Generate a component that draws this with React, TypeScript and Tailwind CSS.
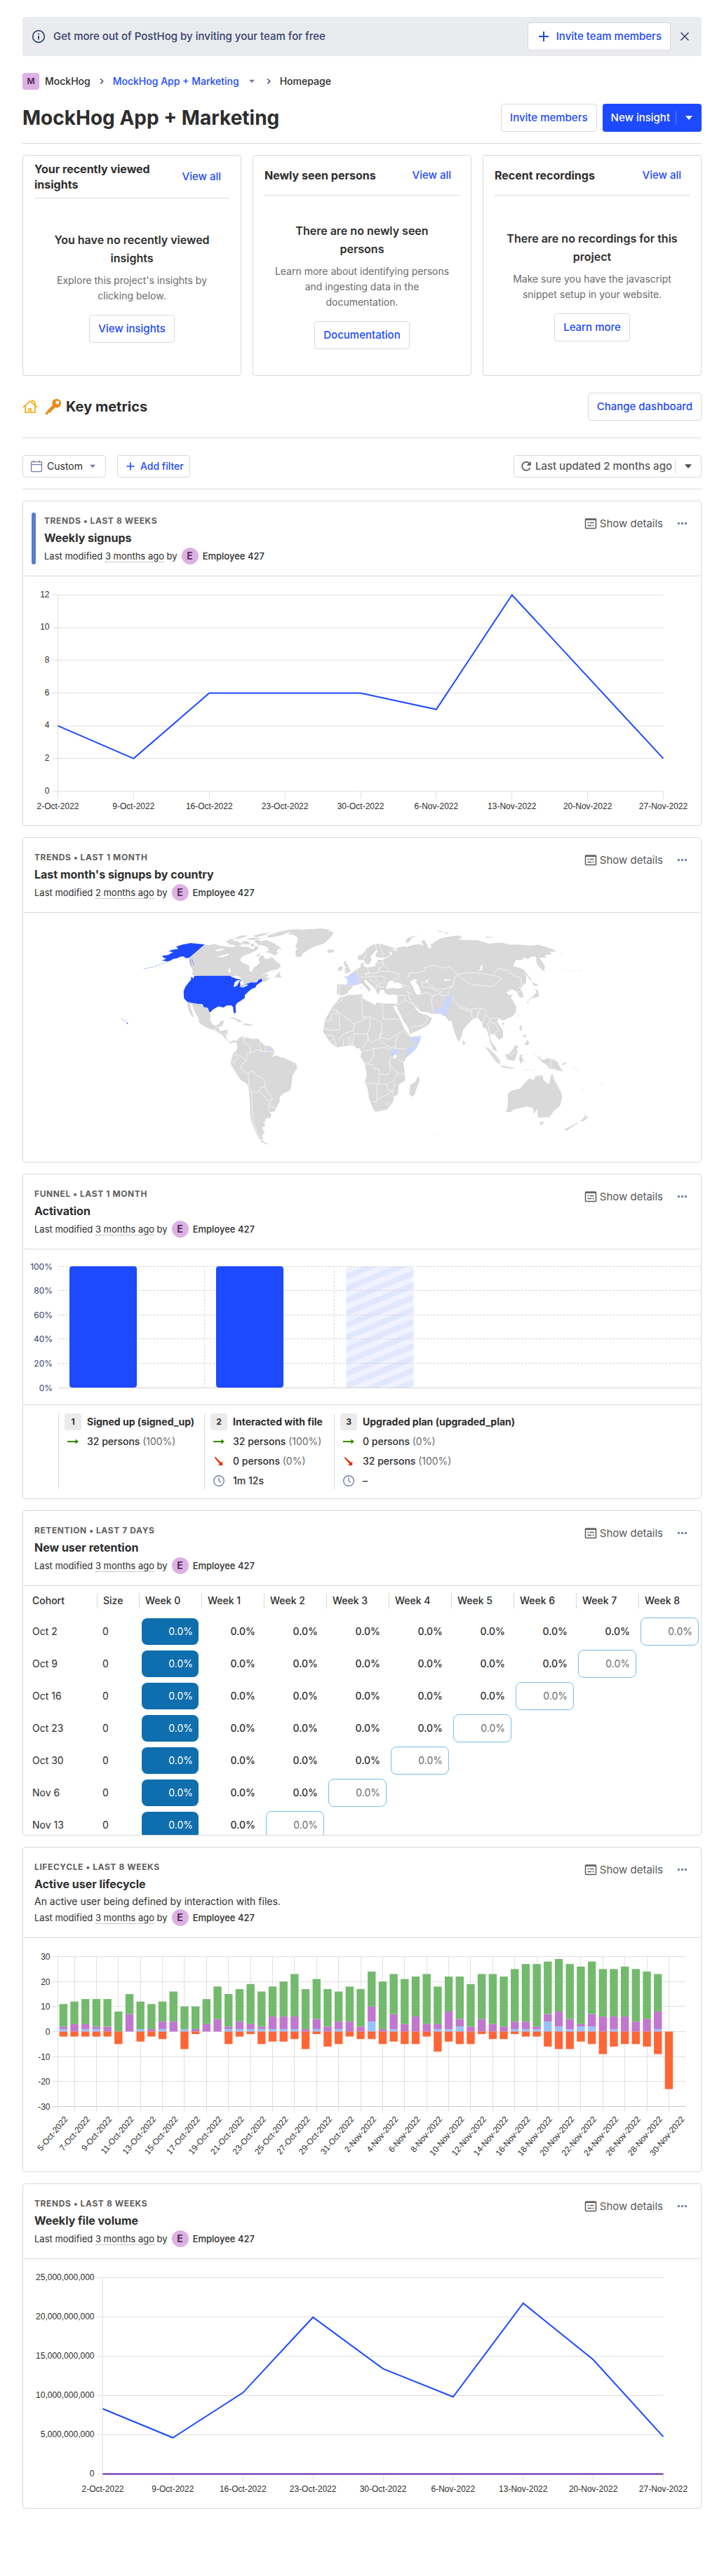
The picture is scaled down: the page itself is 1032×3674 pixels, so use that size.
import React from "react";

/* ---------- icons ---------- */

function InfoIcon() {
  return (
    <svg width="22" height="22" viewBox="0 0 24 24" fill="#35416b" aria-hidden="true">
      <path d="M11 7h2v2h-2zm0 4h2v6h-2zm1-9a10 10 0 1 0 0 20 10 10 0 0 0 0-20zm0 18.2a8.2 8.2 0 1 1 0-16.4 8.2 8.2 0 0 1 0 16.4z" />
    </svg>
  );
}

function PlusIcon({ size = 20 }: { size?: number }) {
  return (
    <svg width={size} height={size} viewBox="0 0 20 20" fill="none" stroke="#1d4aff" strokeWidth="2" aria-hidden="true">
      <path d="M10 3v14M3 10h14" />
    </svg>
  );
}

function CloseIcon() {
  return (
    <svg width="20" height="20" viewBox="0 0 20 20" fill="none" stroke="#35416b" strokeWidth="1.6" aria-hidden="true">
      <path d="M4.5 4.5l11 11M15.5 4.5l-11 11" />
    </svg>
  );
}

function ChevronIcon() {
  return (
    <svg width="16" height="16" viewBox="0 0 16 16" fill="none" stroke="#35416b" strokeWidth="1.4" aria-hidden="true">
      <path d="M6.3 4.5L9.8 8l-3.5 3.5" />
    </svg>
  );
}

function CaretIcon({ className }: { className: string }) {
  return (
    <svg viewBox="0 0 16 16" className={className} fill="currentColor" aria-hidden="true">
      <path d="M4 5.7h8L8 10.3z" />
    </svg>
  );
}

function HomeIcon() {
  return (
    <svg width="22" height="22" viewBox="0 0 22 22" fill="none" stroke="#f7a501" strokeWidth="1.6" aria-hidden="true">
      <path d="M1 11.8L11 3l10 8.800M4.200 10v9.200h5.200V14h2.700v5.200h5.700V10" />
      <path d="M13 1.800l4.800 2.400v4.600" />
    </svg>
  );
}

function KeyIcon() {
  return (
    <svg width="24" height="24" viewBox="0 0 24 24" role="img" aria-label="Key">
      <path d="M11.500 9.500l3.300 3.300-7.600 7.700-2.200.3-.8 2-3 .700-.500-2.300z" fill="#e28413" />
      <path d="M2 21.800L12.500 11" stroke="#f39c2b" strokeWidth="1.200" />
      <path d="M3.800 17.600L11 10.200" stroke="#c56e0b" strokeWidth=".6" />
      <path
        fillRule="evenodd"
        d="M10.500 7.500C10 3.800 13 1 16.800 1 20.800 1 23 3.900 23 7c0 4-3 6.700-6.800 6.500-1.700-.1-2.700-.5-3.700-1.500-1.200-1.100-1.800-2.800-2-4.500zM17.800 3.600a2.500 2.500 0 1 0 0 5 2.500 2.500 0 0 0 0-5z"
        fill="#e88b17"
      />
    </svg>
  );
}

function CalendarIcon() {
  return (
    <svg width="18" height="18" viewBox="0 0 18 18" fill="none" stroke="#747ea2" strokeWidth="1.300" aria-hidden="true">
      <rect x="1.600" y="2.600" width="14.800" height="14" rx="1" />
      <path d="M1.600 6.700h14.800M4.600 .800v3M13.400 .800v3" />
    </svg>
  );
}

function RefreshIcon() {
  return (
    <svg width="18" height="18" viewBox="0 0 18 18" fill="none" stroke="#5a5a5a" strokeWidth="1.700" aria-hidden="true">
      <path d="M14.600 11.300A6 6 0 1 1 13.400 4.600" />
      <path d="M15.700 2v6h-6z" fill="#5a5a5a" stroke="none" />
    </svg>
  );
}

function DetailsIcon() {
  return (
    <svg width="18" height="18" viewBox="0 0 18 18" fill="none" stroke="#5a5a5a" strokeWidth="1.500" aria-hidden="true">
      <rect x="1.500" y="2" width="15" height="13.500" rx="1" />
      <path d="M4.500 7.500h2M7.800 7.500h5.700M4.500 11.500h5.700M11.500 11.500h2M2 3.300h14" />
    </svg>
  );
}

function DotsIcon() {
  return (
    <svg width="16" height="16" viewBox="0 0 16 16" fill="#747ea2" aria-hidden="true">
      <circle cx="2.500" cy="7.500" r="1.700" />
      <circle cx="7.500" cy="7.500" r="1.700" />
      <circle cx="12.500" cy="7.500" r="1.700" />
    </svg>
  );
}

function ArrowRightIcon() {
  return (
    <svg width="16" height="16" viewBox="0 0 16 16" fill="#388600" aria-hidden="true">
      <path d="M0 7.100h11.500V4.500L16 8l-4.500 3.500V8.900H0z" />
    </svg>
  );
}

function ArrowDownIcon() {
  return (
    <svg width="16" height="16" viewBox="0 0 16 16" fill="#db3707" aria-hidden="true">
      <path d="M2.900 1.700l8.300 8.300 2-2.100v6.200H7l2.100-2L1.700 2.900z" />
    </svg>
  );
}

function ClockIcon() {
  return (
    <svg width="18" height="18" viewBox="0 0 18 18" fill="none" stroke="#747ea2" strokeWidth="1.400" aria-hidden="true">
      <circle cx="9" cy="9" r="7.300" />
      <path d="M9 4.500V9l2.800 2.500" />
    </svg>
  );
}

/* ---------- shared parts ---------- */

function OutlineButton({ children }: { children: React.ReactNode }) {
  return (
    <button className="flex h-10 items-center gap-2 rounded border border-[#dadada] bg-white px-3 text-[15px] font-medium text-[#1d4aff]">
      {children}
    </button>
  );
}

type CardProps = {
  kind: string;
  title: string;
  description?: string;
  modified: string;
  ribbon?: boolean;
  children: React.ReactNode;
};

function InsightCard({ kind, title, description, modified, ribbon, children }: CardProps) {
  return (
    <section className="flex h-[464px] flex-col overflow-hidden rounded border border-[#dadada]">
      <header className="flex shrink-0 rounded-b border-b border-[#dadada] p-4">
        {ribbon && <div className="mr-3 -ml-1 w-1.5 rounded-full bg-[#597dce]" />}
        <div className="min-w-0 flex-1">
          <div className="text-xs leading-6 font-bold tracking-wider text-[#5f5f5f] uppercase">{kind}</div>
          <h4 className="mb-0.5 text-base leading-6 font-bold">{title}</h4>
          {description && <p className="text-sm leading-[22px]">{description}</p>}
          <div className="flex h-6 items-center text-[13px]">
            <span>
              Last modified{" "}
              <span className="border-b border-dotted border-[#9a9a9a]">{modified}</span> by
            </span>
            <span className="mx-1.5 flex size-6 items-center justify-center rounded-full bg-[#dcb1e3] text-sm font-bold text-[#572e5e]">
              E
            </span>
            <span className="font-medium">Employee 427</span>
          </div>
        </div>
        <div className="flex h-8 items-center">
          <button className="flex items-center gap-1 text-[15px] text-[#5a5a5a]">
            <DetailsIcon />
            Show details
          </button>
          <button className="mr-0.5 ml-5" aria-label="More options">
            <DotsIcon />
          </button>
        </div>
      </header>
      {children}
    </section>
  );
}

/* ---------- charts ---------- */

const DATES = [
  "2-Oct-2022",
  "9-Oct-2022",
  "16-Oct-2022",
  "23-Oct-2022",
  "30-Oct-2022",
  "6-Nov-2022",
  "13-Nov-2022",
  "20-Nov-2022",
  "27-Nov-2022",
];

type LineChartProps = { left: number; max: number; step: number; values: number[]; zeroLine?: boolean; label: string };

function LineChart({ left, max, step, values, zeroLine, label }: LineChartProps) {
  const right = 912.5;
  const top = 26.5;
  const bottom = 306.5;
  const y = (v: number) => bottom - (v / max) * (bottom - top);
  const x = (i: number) => left + (i * (right - left)) / 8;
  const ticks: number[] = [];
  for (let v = 0; v <= max; v += step) ticks.push(v);
  return (
    <svg viewBox="0 0 966 355" className="w-full" role="img" aria-label={label} fontFamily='"Liberation Sans", sans-serif' fontSize="12" fill="#2d2d2d">
      {ticks.map((v) => (
        <g key={v}>
          <path d={`M${left - 8} ${Math.floor(y(v)) + 0.5}H${right}`} stroke="#e0e0e0" />
          <text x={left - 12} y={y(v) + 3} textAnchor="end">
            {v.toLocaleString("en-US")}
          </text>
        </g>
      ))}
      <path d={`M${left} ${top}V${bottom}`} stroke="#e0e0e0" />
      {DATES.map((d, i) => (
        <g key={d}>
          <path d={`M${Math.floor(x(i)) + 0.5} ${bottom}v11`} stroke="#e0e0e0" />
          <text x={x(i)} y="332" textAnchor="middle">
            {d}
          </text>
        </g>
      ))}
      {zeroLine && <path d={`M${left} ${bottom}H${right}`} stroke="#621da6" strokeWidth="2" />}
      <polyline fill="none" stroke="#1d4aff" strokeWidth="2" points={values.map((v, i) => `${x(i)},${y(v)}`).join(" ")} />
    </svg>
  );
}

/* Each entry: total, top of resurrecting, top of new, dormant */
const LIFECYCLE: number[][] = [
  [11, 2, 1, 2], [12, 3, 0, 2], [13, 3, 1, 2], [13, 2, 1, 2], [13, 2, 0, 2], [8, 0, 0, 5], [15, 7, 0, 0], [12, 1, 1, 4],
  [11, 1, 0, 2], [12, 4, 1, 3], [16, 4, 0, 0], [10, 1, 1, 7], [10, 1, 0, 1], [13, 3, 0, 0], [18, 5, 0, 0], [15, 2, 1, 5],
  [17, 4, 1, 2], [19, 3, 1, 1], [16, 2, 1, 5], [18, 6, 1, 4], [20, 6, 1, 4], [23, 6, 1, 3], [17, 1, 0, 7], [21, 5, 1, 1],
  [17, 2, 0, 6], [16, 4, 1, 5], [18, 4, 0, 2], [17, 2, 0, 3], [24, 10, 4, 3], [20, 1, 0, 5], [23, 7, 1, 4], [21, 3, 0, 5],
  [22, 6, 0, 5], [23, 3, 0, 2], [18, 3, 1, 8], [22, 8, 1, 4], [22, 5, 2, 5], [19, 2, 0, 5], [23, 5, 0, 1], [23, 3, 0, 3],
  [22, 2, 0, 3], [25, 4, 1, 1], [27, 4, 1, 2], [27, 2, 1, 2], [28, 7, 4, 6], [29, 8, 2, 7], [27, 5, 1, 7], [26, 3, 2, 4],
  [28, 7, 2, 5], [25, 6, 0, 9], [25, 6, 1, 6], [26, 6, 0, 5], [25, 4, 0, 5], [24, 5, 0, 6], [23, 8, 1, 9], [0, 0, 0, 23],
];

function lifecycleDate(i: number) {
  const day = 5 + i * 2;
  return day <= 31 ? `${day}-Oct-2022` : `${day - 31}-Nov-2022`;
}

function LifecycleChart() {
  const left = 49.5;
  const right = 944;
  const pitch = (right - left) / 57;
  const zero = 133.5;
  const unit = 107 / 30;
  const center = (i: number) => left + pitch * (i + 0.5);
  return (
    <svg viewBox="0 0 966 333" className="w-full" role="img" aria-label="Active user lifecycle" fontFamily='"Liberation Sans", sans-serif' fontSize="12" fill="#2d2d2d">
      {[30, 20, 10, 0, -10, -20, -30].map((v) => {
        const y = Math.floor(zero - v * unit) + 0.5;
        return (
          <g key={v}>
            <path d={`M${left - 8} ${y}H${right}`} stroke={v === -30 ? "#c8c8c8" : "#e0e0e0"} />
            <text x={left - 11} y={y + 4} textAnchor="end">
              {v}
            </text>
          </g>
        );
      })}
      {Array.from({ length: 29 }, (_, k) => {
        const gx = k === 0 ? left : Math.floor(center(2 * k - 1)) + 0.5;
        return <path key={k} d={`M${gx} 26.500V248.500`} stroke="#e0e0e0" />;
      })}
      {LIFECYCLE.map(([total, res, fresh, dormant], i) => {
        const bx = center(i) - 5.7;
        const bar = (from: number, to: number, fill: string) =>
          from === to ? null : <rect x={bx} y={zero - Math.max(from, to) * unit} width="11.400" height={Math.abs(to - from) * unit} fill={fill} />;
        return (
          <g key={i}>
            {bar(0, fresh, "#98c2ff")}
            {bar(fresh, res, "#c177cf")}
            {bar(res, total, "#73ba6d")}
            {bar(0, -dormant, "#ff6636")}
          </g>
        );
      })}
      {Array.from({ length: 29 }, (_, k) => (
        <text key={k} textAnchor="end" dy="4" transform={`translate(${center(2 * k) + 4} 256) rotate(-50)`}>
          {lifecycleDate(k)}
        </text>
      ))}
    </svg>
  );
}

function FunnelChart() {
  const top = 25.5;
  const gap = 34.6;
  return (
    <svg viewBox="0 0 966 222" className="w-full" role="img" aria-label="Activation funnel" fontFamily="Inter, sans-serif" fontSize="12" fill="#35416b">
      <defs>
        <pattern id="stripes" width="16" height="16" patternUnits="userSpaceOnUse" patternTransform="rotate(-22.5)">
          <rect width="16" height="16" fill="#f1f2ff" />
          <rect width="16" height="8" fill="#e0e7ff" />
        </pattern>
      </defs>
      <rect x="460.500" y="24.500" width="96" height="173" rx="4" fill="url(#stripes)" />
      {[100, 80, 60, 40, 20, 0].map((v, i) => {
        const y = Math.floor(top + i * gap - 1.5) + 0.5;
        return (
          <g key={v}>
            <path d={`M50 ${y}H966`} stroke="#d4d4d4" strokeDasharray={v === 0 ? undefined : "3 2"} />
            <text x="42" y={y + 4} textAnchor="end">
              {v}%
            </text>
          </g>
        );
      })}
      <path d="M258.500 25V197M443.500 25V197" stroke="#dadada" strokeDasharray="3 2" />
      <rect x="66" y="24" width="96" height="173" rx="4" fill="#1d4aff" />
      <rect x="275" y="24" width="96" height="173" rx="4" fill="#1d4aff" />
    </svg>
  );
}

type Step = { n: number; name: string; rows: { icon: React.ReactNode; text: string; pct?: string }[] };

const STEPS: Step[] = [
  { n: 1, name: "Signed up (signed_up)", rows: [{ icon: <ArrowRightIcon />, text: "32 persons", pct: "(100%)" }] },
  {
    n: 2,
    name: "Interacted with file",
    rows: [
      { icon: <ArrowRightIcon />, text: "32 persons", pct: "(100%)" },
      { icon: <ArrowDownIcon />, text: "0 persons", pct: "(0%)" },
      { icon: <ClockIcon />, text: "1m 12s" },
    ],
  },
  {
    n: 3,
    name: "Upgraded plan (upgraded_plan)",
    rows: [
      { icon: <ArrowRightIcon />, text: "0 persons", pct: "(0%)" },
      { icon: <ArrowDownIcon />, text: "32 persons", pct: "(100%)" },
      { icon: <ClockIcon />, text: "–" },
    ],
  },
];

function FunnelSteps() {
  return (
    <div className="-mt-px grid grid-cols-[50px_208px_185px_1fr] border-t border-[#dadada] py-3">
      <div />
      {STEPS.map((s) => (
        <div key={s.n} className="flex h-[108px] flex-col gap-1 border-l border-[#dadada] pl-2 text-sm">
          <div className="flex h-6 items-center gap-2 font-bold whitespace-nowrap">
            <span className="flex size-6 items-center justify-center rounded bg-[#ebebeb] text-xs">{s.n}</span>
            {s.name}
          </div>
          {s.rows.map((r, i) => (
            <div key={i} className="flex h-6 items-center gap-2 font-medium whitespace-nowrap">
              <span className="flex w-6 justify-center">{r.icon}</span>
              <span>
                {r.text} {r.pct && <span className="font-normal text-[#6b6b6b]">{r.pct}</span>}
              </span>
            </div>
          ))}
        </div>
      ))}
    </div>
  );
}

const COHORTS = ["Oct 2", "Oct 9", "Oct 16", "Oct 23", "Oct 30", "Nov 6", "Nov 13"];
const WEEKS = [0, 1, 2, 3, 4, 5, 6, 7, 8];

function RetentionTable() {
  return (
    <table className="-mt-px w-full table-fixed text-left text-sm">
      <thead>
        <tr className="h-[43px]">
          <th className="w-[105px] pl-[13px] font-medium">Cohort</th>
          <th className="w-[60px] font-medium">
            <span className="block border-l border-[#dadada] pl-2 leading-[22px]">Size</span>
          </th>
          {WEEKS.map((w) => (
            <th key={w} className="font-medium">
              <span className="block border-l border-[#dadada] pl-2 leading-[22px]">Week {w}</span>
            </th>
          ))}
        </tr>
      </thead>
      <tbody>
        {COHORTS.map((c, row) => (
          <tr key={c} className="h-[46px]">
            <td className="pl-[13px]">{c}</td>
            <td className="pl-2">0</td>
            {WEEKS.map((w) => (
              <td key={w} className="px-1 py-0">
                {w === 0 && <div className="rounded-lg bg-[#0f6eae] pr-2 text-right leading-[38px] text-white">0.0%</div>}
                {w > 0 && w < 8 - row && <div className="pr-2 text-right leading-[38px] font-medium">0.0%</div>}
                {w > 0 && w === 8 - row && (
                  <div className="-mx-px rounded-lg border border-[#77bdea] pr-2 text-right leading-[38px] text-[#6b6b6b]">0.0%</div>
                )}
              </td>
            ))}
          </tr>
        ))}
      </tbody>
    </table>
  );
}

/* ---------- world map ---------- */

const WEST_LAND = [
  "380,99 400,102 420,97 440,103 470,108 500,110 520,104 545,110 560,108 575,115 588,120 596,106 612,108 605,122 590,130 572,138 545,148 532,162 538,176 556,182 570,190 572,214 582,215 588,200 605,188 616,176 610,162 618,146 632,148 640,162 655,160 664,152 676,158 685,172 700,180 706,193 690,206 665,210 640,222 622,234 645,224 652,232 640,240 660,242 640,258 630,260 626,246 608,252 600,262 575,263 545,276 530,282 520,260 500,238 337,232 326,228 330,212 318,188 312,160 315,154",
  "680,240 692,224 706,214 700,226 710,240 696,241",
  "306,346 325,349 350,353 368,353 380,367 390,367 402,389 405,402 403,420 412,440 425,446 442,440 447,428 465,424 460,436 455,448 446,450 440,452 442,464 455,468 480,463 478,478 472,490 476,506 490,516 505,508 516,513 514,523 508,516 494,523 480,512 462,495 455,485 440,478 425,466 405,461 385,452 365,440 355,432 356,418 345,400 335,380 325,356 318,352 322,375 333,408 328,410 317,392 308,370",
  "482,416 500,411 525,420 542,430 525,431 505,418",
  "548,436 575,440 590,444 572,447 548,443",
  "515,512 530,497 550,490 545,500 560,497 585,503 610,502 620,515 635,530 660,535 672,545 680,560 668,580 685,574 700,580 720,585 750,598 772,610 776,630 755,660 752,700 745,725 720,735 702,750 700,775 685,800 680,814 660,816 655,812 665,828 663,840 640,845 640,857 628,858 638,865 635,880 625,882 637,905 625,915 630,934 614,932 600,905 590,880 580,855 575,830 574,780 568,710 560,695 535,680 515,650 493,615 492,600 497,585 500,567 515,555 520,540",
  "628,935 640,948 660,953 640,953 618,940",
  "735,54 765,40 825,34 880,31 925,37 905,40 932,46 925,60 910,78 890,95 850,108 820,124 800,138 790,154 770,150 768,130 775,118 768,105 775,92 778,70 760,58",
  "470,86 490,76 510,78 498,86 520,84 530,92 545,96 530,104 515,106 500,100 488,100",
  "535,88 560,84 575,92 568,100 548,98",
  "590,84 610,78 620,86 640,80 665,88 690,102 712,120 695,118 688,128 694,138 680,146 660,136 640,132 655,124 650,112 635,104 612,102 600,92",
  "600,146 620,136 615,145 604,152",
  "575,98 590,94 592,106 580,108",
  "645,62 700,44 750,35 800,32 770,42 735,48 715,58 680,66 655,70",
  "585,62 630,52 660,48 635,60 600,68",
  "505,72 540,60 565,60 550,68 520,76",
  "560,74 585,70 625,72 600,78 570,80",
];

const USA = [
  "322,238 328,240 330,246 337,233 488,233 500,241 515,238 532,250 540,262 530,282 548,276 560,268 578,262 602,262 612,250 625,245 627,256 612,266 602,273 598,283 580,290 568,300 560,308 552,316 552,328 535,340 518,350 512,362 514,388 509,396 503,386 502,368 495,360 475,360 460,369 440,364 425,372 412,380 406,389 400,387 394,372 388,368 378,368 370,354 350,353 325,349 306,345 292,330 290,300 298,280 312,262 322,250",
  "380,99 315,155 300,158 290,150 275,152 262,158 245,161 235,168 222,172 198,168 216,160 205,156 198,148 224,144 245,132 225,128 240,122 268,118 258,108 285,100 320,93 350,96",
  "46,432 53,436 49,440",
];

const WEST_WATER = [
  "428,122 450,117 466,120 448,126 430,130",
  "432,152 452,146 480,139 484,143 456,154",
  "482,204 488,197 491,216 482,222",
  "498,237 515,232 535,240 534,248 515,246",
  "504,282 508,262 520,252 532,252 518,276",
  "531,256 546,258 544,270 534,280",
  "534,284 560,270 566,273 548,282",
];

const WEST_BORDERS = [
  "545,495 550,520 575,532 575,560 562,570 558,600",
  "575,560 590,560 600,548 625,556 638,558 660,558 676,560",
  "620,515 612,535 627,556",
  "640,536 638,558",
  "497,568 520,572 540,580 558,600 540,610 535,630 550,645 565,650 588,640 600,658 625,668 638,685 640,708 618,712 612,728 590,730 582,735 570,700 565,650",
  "495,600 505,605 525,580",
  "640,708 645,730 662,740 670,760 655,785 652,812",
  "612,728 635,748 648,768 668,762",
  "655,785 685,803",
  "582,735 583,790 588,850 600,890 615,925",
  "425,464 430,452 440,450",
  "440,478 446,466 455,468",
  "462,490 472,476 480,470",
];

const EAST_LAND = [
  "78,126 84,121 110,122 112,127 100,134 86,135",
  "150,172 162,170 160,180 168,186 170,198 180,210 176,218 150,221 160,212 152,206 160,198 152,188",
  "127,197 140,191 146,200 142,210 125,213",
  "122,270 165,271 190,280 172,297 165,310 142,318 120,313",
  "208,158 212,148 230,140 245,118 270,102 295,95 315,98 330,103 352,110 372,118 352,122 345,132 352,142 340,150 325,157 300,155 286,150 288,138 298,125 288,122 278,136 264,150 270,164 258,182 245,184 236,166 215,166",
  "185,220 200,210 212,200 222,196 222,182 238,176 234,190 246,198 275,194 288,190 284,180 296,172 292,166 316,164 335,156 350,146 360,140 348,128 352,122 366,124 380,130 372,118 386,112 410,106 416,112 440,103 460,98 480,100 492,108 480,84 495,80 506,98 515,118 525,112 520,95 538,98 530,92 560,75 600,65 640,60 658,68 640,78 680,80 720,80 745,88 770,96 800,92 830,92 860,100 900,100 950,104 980,100 1010,108 1040,118 1060,130 1030,130 1040,140 1010,145 1015,155 985,155 1000,175 1010,192 1008,215 990,200 975,180 972,150 950,152 940,162 918,154 916,165 886,165 875,192 900,198 918,206 930,235 930,262 915,275 905,288 915,305 920,325 905,328 895,314 888,300 870,290 852,300 845,305 856,316 876,313 864,325 876,345 888,365 886,390 870,408 845,418 835,425 815,418 805,425 815,445 830,465 832,495 815,508 805,498 795,485 778,480 775,500 785,522 800,540 806,560 790,550 776,520 770,490 760,460 745,455 742,435 725,415 708,416 695,425 680,442 660,465 655,490 643,515 635,505 620,465 610,425 600,427 582,405 560,395 530,396 500,388 480,386 455,362 455,372 470,388 492,400 505,398 510,404 528,415 515,440 485,460 433,482 425,455 405,425 385,385 374,360 380,345 380,316 360,312 345,316 326,308 322,292 305,296 300,314 290,305 284,288 262,268 248,254 240,250 236,258 250,272 268,290 262,293 260,305 252,292 238,278 225,265 212,270",
  "135,325 150,322 170,316 195,314 230,312 232,330 260,345 285,360 290,347 320,352 370,352 375,362 360,362 372,384 385,405 400,440 410,462 430,485 435,496 478,490 478,505 460,545 420,580 405,605 410,635 413,680 385,700 382,740 365,750 360,775 335,805 285,815 275,800 258,760 252,715 240,690 248,655 240,610 222,580 225,560 220,545 205,542 192,530 150,535 118,540 90,515 62,475 68,425 95,378 110,355",
  "470,660 475,680 465,705 452,745 440,750 430,740 434,700 455,688",
  "658,508 670,520 666,530 659,528",
  "914,198 932,222 955,252 948,252 928,225",
  "955,258 968,266 984,270 972,276 960,274",
  "970,288 980,296 986,320 972,326 956,328 934,342 946,330 962,318 972,305",
  "932,344 942,344 938,354",
  "894,398 899,402 896,416",
  "828,435 838,433 836,444 830,443",
  "902,444 910,446 912,462 908,470 902,462",
  "935,506 943,520 938,530 922,528",
  "916,488 930,486 925,500",
  "753,535 772,545 795,568 818,595 818,613 800,600 775,565",
  "818,616 845,620 888,630 862,631 826,624",
  "840,570 860,564 872,548 886,528 898,538 888,545 894,560 888,575 880,598 850,592",
  "903,572 928,568 910,576 922,604 912,598 906,612 900,590",
  "978,578 990,580 992,588 1006,594 1018,586 1050,592 1066,602 1070,618 1088,643 1066,638 1050,632 1030,632 1018,614 1000,604",
  "1080,612 1098,602 1104,605 1090,616",
  "842,815 850,800 852,765 850,740 865,725 905,715 925,690 945,672 962,680 970,662 1000,658 1005,680 1028,698 1036,660 1042,650 1052,682 1075,722 1085,750 1075,790 1050,810 1030,838 980,840 978,802 962,825 960,800 935,792 880,805 862,816",
  "988,858 1008,858 992,875",
  "1180,818 1184,832 1196,838 1176,855 1160,856 1180,838",
  "1152,858 1148,866 1102,897 1092,890 1130,872",
  "412,92 420,74 440,66 466,61 440,72 428,90",
  "545,38 580,44 560,46",
  "580,46 600,50 585,54",
  "755,64 790,68 805,70 760,70",
];

const EAST_ACTIVE = [
  "150,236 166,235 188,219 216,234 210,250 213,270 185,276 165,272 166,250",
  "222,275 226,285 222,292",
  "537,370 568,372 582,350 588,318 604,316 614,328 608,335 608,350 592,375 592,398 576,405 565,393 540,395",
  "431,492 440,500 480,490 475,515 455,550 421,580 420,548 450,535 462,518 438,510",
  "357,548 380,545 380,562 366,574 350,580 352,562",
];

const EAST_WATER = [
  "330,284 338,262 352,253 366,258 362,264 382,262 402,276 402,284 380,288 358,284 336,290",
  "434,262 446,248 464,248 456,260 468,274 476,292 480,312 462,314 452,298 446,280",
  "722,214 735,206 736,188 744,192 740,210",
  "576,258 582,248 606,248 606,252 586,254",
  "360,574 376,570 376,584 362,588",
  "497,256 512,248 506,260",
];

const EAST_BORDERS = [
  "228,315 225,335 230,375 230,410 260,408 313,434",
  "120,382 195,440 248,416 230,410",
  "98,378 118,378 118,395 98,395 95,422 68,428",
  "118,395 130,400 133,465 90,465 68,458",
  "195,440 192,468 165,475 140,490 128,508",
  "192,468 195,490 186,530",
  "195,482 250,482 262,455 262,410",
  "250,482 255,498 240,530 225,545",
  "316,352 318,418 383,418",
  "313,434 313,465 302,500 270,520 258,512 250,482",
  "302,500 330,532 375,545 410,545 420,548",
  "313,465 304,498 345,505 385,478 404,470",
  "375,545 370,515 385,485",
  "404,470 430,492",
  "280,545 320,540 355,548",
  "225,556 262,550 280,545 276,580 258,606 240,606",
  "240,612 272,612 280,630 300,632 304,655 340,655 350,640 345,600 352,580",
  "240,692 300,696 302,662",
  "300,696 330,698 360,684 382,650 412,655",
  "345,605 360,632 382,650",
  "378,588 410,610",
  "292,700 292,770 272,775",
  "292,760 330,745 355,728 365,750",
  "330,698 340,722 360,728 370,690",
  "328,780 336,772 344,778 336,788 328,780",
  "90,515 110,500 118,540",
  "150,500 148,535",
  "168,495 170,535",
  "178,490 178,530",
  "62,485 100,488 110,500",
  "110,355 135,345 150,320",
  "212,198 208,220 215,235",
  "250,198 258,222 240,225 250,234",
  "300,196 298,218 270,224 258,222",
  "298,205 320,188 335,198 342,215 300,212",
  "342,215 388,226 386,242 362,250",
  "215,240 262,236 300,234 322,238 330,260 300,268 285,240",
  "262,238 270,255 290,268 290,290",
  "300,268 302,282 325,280",
  "135,272 130,314",
  "245,118 240,160",
  "300,96 310,120 322,150",
  "284,98 290,122",
  "318,164 318,188",
  "288,182 318,178",
  "385,265 425,278 435,290",
  "425,240 430,222 465,220 498,212 498,198 535,188 565,200 600,196 640,228",
  "410,280 425,305 440,312",
  "380,318 410,316 412,335 380,360",
  "412,335 455,362",
  "425,305 430,330 455,362",
  "430,460 450,450 485,445 485,460",
  "485,445 508,425 500,402",
  "480,312 505,305 530,318 525,345 530,372 540,392",
  "484,258 485,280 520,285 560,305 580,295",
  "484,262 510,265 545,290 580,290 625,272",
  "640,228 625,240 620,272 595,300 600,318 615,328",
  "530,318 560,310 575,318 600,318",
  "640,228 660,222 700,220 740,222 790,232 826,242 805,262 790,278 740,275 690,268 655,245 640,228",
  "790,230 810,202 850,210 880,236 905,240 910,270 895,290",
  "615,328 640,360 690,378 735,370 755,382 760,400 775,420 805,412 820,420",
  "690,378 695,388 640,368",
  "695,388 700,415 720,415 722,385",
  "735,370 722,415",
  "755,400 742,435",
  "775,420 765,440 775,480",
  "775,430 800,440 815,470 795,475 800,490",
  "1035,590 1035,634",
  "845,568 870,572 885,555",
  "890,305 905,300",
  "465,380 500,396",
];

function WorldMap() {
  const poly = (pts: string[], fill: string) => pts.map((p) => <polygon key={p} points={p} fill={fill} />);
  const lines = (pts: string[]) => pts.map((p) => <polyline key={p} points={p} />);
  return (
    <svg viewBox="0 0 966 355" className="w-full" role="img" aria-label="World map of signups by country">
      <g transform="translate(132 12) scale(.33333)">
        {poly(WEST_LAND, "#d9d9d9")}
        {poly(USA, "#1d4aff")}
        {poly(WEST_WATER, "#fff")}
        {poly(["657,535 670,545 662,557"], "#cad6ff")}
        <g fill="none" stroke="#fff" strokeWidth="2" strokeLinejoin="round">
          {lines(WEST_BORDERS)}
        </g>
        <g fill="none" stroke="#1d4aff" strokeLinecap="round">
          <path d="M120 204L160 195L190 185L225 172" strokeWidth="1.200" strokeDasharray="10 6" />
          <path d="M318 164L322 186M326 164L334 186" strokeWidth="2" strokeDasharray="5 5" />
          <path d="M28 418l2 1M38 425l3 2" strokeWidth="2" />
        </g>
        <g transform="translate(825 0)">
          {poly(EAST_LAND, "#d9d9d9")}
          {poly(EAST_WATER, "#fff")}
          <g fill="none" stroke="#fff" strokeWidth="2" strokeLinejoin="round">
            {lines(EAST_BORDERS)}
          </g>
          {poly(EAST_ACTIVE, "#cad6ff")}
          <g fill="none" stroke="#cad6ff" strokeWidth="2">
            <path d="M1075 136h10M1080 206l12 4M1110 210l28 3M1150 210l20 0" strokeDasharray="7 4" />
          </g>
          <g fill="none" stroke="#dcdcdc" strokeWidth="2">
            <path d="M920 640l24 -8M950 640l18 -4M1128 626l30 16M1165 715l10 12M1246 698l16 -10M930 566l8 4M955 570l20 0M544 915l8 3" />
          </g>
        </g>
      </g>
    </svg>
  );
}

/* ---------- page ---------- */

type EmptyCardProps = { heading: string; title: string; text: string; action: string };

function EmptyCard({ heading, title, text, action }: EmptyCardProps) {
  return (
    <section className="flex h-[315px] flex-col rounded border border-[#dadada] px-4 pt-2">
      <div className="flex items-center justify-between border-b border-[#dadada] pb-2">
        <h3 className="text-base leading-[22px] font-bold">{heading}</h3>
        <a href="#all" className="flex h-10 shrink-0 items-center px-3 text-[15px] font-medium text-[#1d4aff]">
          View all
        </a>
      </div>
      <div className="flex flex-1 flex-col items-center justify-center px-2 text-center">
        <h4 className="mb-2 text-base leading-[26px] font-semibold whitespace-pre-line">{title}</h4>
        <p className="mb-4 text-sm leading-[22px] text-[#6b6b6b]">{text}</p>
        <OutlineButton>{action}</OutlineButton>
      </div>
    </section>
  );
}

export default function App() {
  return (
    <main className="bg-white px-8 pt-6 pb-24 font-[Inter,sans-serif] text-sm text-[#2d2d2d]">
      <div className="flex h-14 items-center rounded bg-[#eaebef] pr-1 pl-3 text-[15px] font-medium text-[#35416b]">
        <InfoIcon />
        <span className="ml-2.5 flex-1">Get more out of PostHog by inviting your team for free</span>
        <OutlineButton>
          <PlusIcon />
          Invite team members
        </OutlineButton>
        <button className="mx-2.5" aria-label="Dismiss">
          <CloseIcon />
        </button>
      </div>

      <nav className="mt-6 flex h-6 items-center font-medium" aria-label="Breadcrumb">
        <span className="mr-2 flex size-6 items-center justify-center rounded bg-[#dcb1e3] text-xs font-bold text-[#572e5e]">M</span>
        <span>MockHog</span>
        <span className="mx-2">
          <ChevronIcon />
        </span>
        <a href="#project" className="flex items-center gap-2.5 text-[#1d4aff]">
          MockHog App + Marketing
          <CaretIcon className="size-4 text-[#747ea2]" />
        </a>
        <span className="mx-2">
          <ChevronIcon />
        </span>
        <span>Homepage</span>
      </nav>

      <div className="mt-5 flex items-center justify-between border-b border-[#dadada] pb-4">
        <h1 className="text-[28px] leading-8 font-bold">MockHog App + Marketing</h1>
        <div className="flex gap-2">
          <OutlineButton>Invite members</OutlineButton>
          <div className="flex h-10 items-center rounded bg-[#1d4aff] text-[15px] font-medium text-white">
            <button className="h-10 pr-2 pl-3">New insight</button>
            <span className="h-5 w-px bg-white/30" />
            <button className="flex h-10 w-9 items-center justify-center" aria-label="More insight types">
              <CaretIcon className="size-5" />
            </button>
          </div>
        </div>
      </div>

      <div className="mt-4 grid grid-cols-3 gap-4">
        <EmptyCard
          heading="Your recently viewed insights"
          title={"You have no recently viewed\ninsights"}
          text="Explore this project's insights by clicking below."
          action="View insights"
        />
        <EmptyCard
          heading="Newly seen persons"
          title={"There are no newly seen\npersons"}
          text="Learn more about identifying persons and ingesting data in the documentation."
          action="Documentation"
        />
        <EmptyCard
          heading="Recent recordings"
          title={"There are no recordings for this\nproject"}
          text="Make sure you have the javascript snippet setup in your website."
          action="Learn more"
        />
      </div>

      <div className="mt-6 flex items-center justify-between border-b border-[#dadada] pb-6">
        <h2 className="flex items-center text-xl font-bold">
          <HomeIcon />
          <span className="mr-1.5 ml-2.5">
            <KeyIcon />
          </span>
          Key metrics
        </h2>
        <OutlineButton>Change dashboard</OutlineButton>
      </div>

      <div className="flex h-[73px] items-center gap-4 border-b border-[#dadada] pt-2">
        <button className="flex h-8 items-center rounded border border-[#dadada] pr-2.5 pl-2.5">
          <CalendarIcon />
          <span className="mr-1.5 ml-1.5">Custom</span>
          <CaretIcon className="size-4 text-[#747ea2]" />
        </button>
        <button className="flex h-8 items-center gap-1.5 rounded border border-[#dadada] pr-2 pl-2.5 font-medium text-[#1d4aff]">
          <PlusIcon size={16} />
          Add filter
        </button>
        <div className="ml-auto flex h-8 items-center rounded border border-[#dadada] text-[15px] font-medium text-[#5a5a5a]">
          <button className="flex h-8 items-center gap-1 pr-1 pl-2">
            <RefreshIcon />
            Last updated 2 months ago
          </button>
          <span className="h-5 w-px bg-[#dadada]" />
          <button className="flex h-8 w-9 items-center justify-center" aria-label="Refresh options">
            <CaretIcon className="size-5 text-[#4a4a4a]" />
          </button>
        </div>
      </div>

      <div className="mt-4 flex flex-col gap-4">
        <InsightCard kind="Trends • Last 8 weeks" title="Weekly signups" modified="3 months ago" ribbon>
          <LineChart label="Weekly signups" left={49.5} max={12} step={2} values={[4, 2, 6, 6, 6, 5, 12, 7, 2]} />
        </InsightCard>
        <InsightCard kind="Trends • Last 1 month" title="Last month's signups by country" modified="2 months ago">
          <WorldMap />
        </InsightCard>
        <InsightCard kind="Funnel • Last 1 month" title="Activation" modified="3 months ago">
          <FunnelChart />
          <FunnelSteps />
        </InsightCard>
        <InsightCard kind="Retention • Last 7 days" title="New user retention" modified="3 months ago">
          <RetentionTable />
        </InsightCard>
        <InsightCard
          kind="Lifecycle • Last 8 weeks"
          title="Active user lifecycle"
          description="An active user being defined by interaction with files."
          modified="3 months ago"
        >
          <LifecycleChart />
        </InsightCard>
        <InsightCard kind="Trends • Last 8 weeks" title="Weekly file volume" modified="3 months ago">
          <LineChart
            label="Weekly file volume"
            left={113.5}
            max={25000000000}
            step={5000000000}
            values={[8.3e9, 4.62e9, 10.35e9, 19.96e9, 13.4e9, 9.82e9, 21.75e9, 14.55e9, 4.75e9]}
            zeroLine
          />
        </InsightCard>
      </div>
    </main>
  );
}
